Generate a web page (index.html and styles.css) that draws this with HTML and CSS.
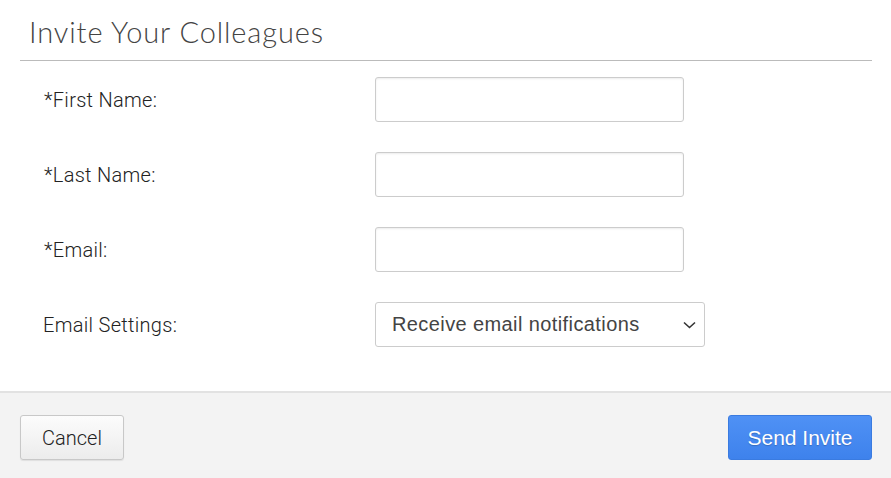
FILE: index.html
```html
<!DOCTYPE html>
<html lang="en">
<head>
  <meta charset="UTF-8" />
  <meta name="viewport" content="width=device-width, initial-scale=1" />
  <title>Invite Your Colleagues</title>
  <link rel="stylesheet" href="styles.css">
</head>
<body>

<div class="modal">
  <div class="modal-body">
    <h1>Invite Your Colleagues</h1>

    <form class="invite-form">
      <div class="row">
        <label for="first-name">*First Name:</label>
        <input type="text" id="first-name">
      </div>
      <div class="row">
        <label for="last-name">*Last Name:</label>
        <input type="text" id="last-name">
      </div>
      <div class="row">
        <label for="email">*Email:</label>
        <input type="text" id="email">
      </div>
      <div class="row">
        <label for="settings" class="plain">Email Settings:</label>
        <div class="select">
          <span>Receive email notifications</span>
          <svg width="13" height="8" viewBox="0 0 13 8"><path d="M1 1.5 L6.5 6.5 L12 1.5" fill="none" stroke="#333" stroke-width="1.6"/></svg>
        </div>
      </div>
    </form>
  </div>

  <div class="modal-footer">
    <button class="btn btn-cancel">Cancel</button>
    <button class="btn btn-send">Send Invite</button>
  </div>
</div>

</body>
</html>
```

FILE: styles.css
```css
body {
  margin: 0;
  background: #fff;
  font-family: 'Roboto', 'Noto Sans', sans-serif;
  color: #333;
}
.modal {
  width: 891px;
  height: 478px;
  display: flex;
  flex-direction: column;
}
.modal-body {
  height: 391px;
  padding: 0 19px 0 20px;
}
h1 {
  margin: 0;
  padding: 14px 0 0 9px;
  height: 46px;
  font-family: 'Lato', sans-serif;
  font-weight: 300;
  font-size: 29px;
  letter-spacing: 0.9px;
  color: #444;
  border-bottom: 1px solid #bbb;
  box-sizing: content-box;
}
.invite-form {
  padding-top: 16px;
}
.row {
  display: flex;
  align-items: center;
  height: 45px;
  margin-bottom: 30px;
}
.row label {
  width: 331px;
  padding-left: 24px;
  font-size: 20px;
  font-weight: 300;
  letter-spacing: 0.3px;
  color: #222;
}
.row label.plain {
  width: 332px;
  padding-left: 23px;
}
input[type="text"] {
  width: 309px;
  height: 45px;
  box-sizing: border-box;
  border: 1px solid #ccc;
  border-radius: 3px;
  box-shadow: inset 0 1px 2px rgba(0,0,0,0.08);
  padding: 0 10px;
  font-size: 16px;
  font-family: inherit;
}
.select {
  width: 330px;
  height: 45px;
  box-sizing: border-box;
  border: 1px solid #ccc;
  border-radius: 3px;
  display: flex;
  align-items: center;
  justify-content: space-between;
  padding: 0 8px 0 16px;
  font-family: 'Liberation Sans', Arial, sans-serif;
  font-size: 20px;
  letter-spacing: 0.4px;
  color: #444;
}
.modal-footer {
  flex: 1;
  background: #f3f3f3;
  border-top: 2px solid #e2e2e2;
  display: flex;
  justify-content: space-between;
  align-items: flex-start;
  padding: 22px 19px 0 20px;
}
.btn {
  height: 45px;
  border-radius: 3px;
  cursor: pointer;
}
.btn-cancel {
  width: 104px;
  background: linear-gradient(#fcfcfc, #ececec);
  border: 1px solid #c8c8c8;
  box-shadow: 0 1px 1px rgba(0,0,0,0.08);
  font-family: 'Roboto', sans-serif;
  font-size: 20px;
  font-weight: 300;
  color: #222;
}
.btn-send {
  width: 144px;
  background: linear-gradient(#4f91f5, #3e82ec);
  border: 1px solid #3a7be0;
  font-family: 'Liberation Sans', Arial, sans-serif;
  font-size: 21px;
  color: #fff;
  text-shadow: 0 1px 1px rgba(0,0,0,0.2);
}
```
